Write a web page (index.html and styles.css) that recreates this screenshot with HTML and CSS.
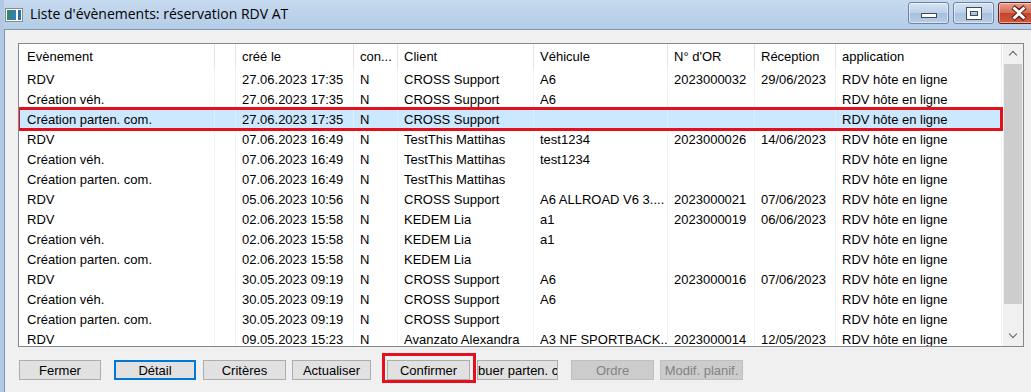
FILE: index.html
```html
<!DOCTYPE html>
<html lang="fr">
<head>
	<meta charset="UTF-8">
	<title>Liste d'évènements</title>
	<link rel="stylesheet" href="styles.css">
</head>
<body>
	<div class="window">
		<div class="titleBar">
			<span class="appIcon"></span>
			<span class="titleText">Liste d'évènements: réservation RDV AT</span>
			<div class="capButtons">
				<span class="capBtn"><span class="minGlyph"></span></span>
				<span class="capBtn"><span class="maxGlyph"></span></span>
				<span class="capBtn closeBtn">
					<svg width="22" height="16" viewBox="0 0 22 16">
						<path d="M5 2 L11 7 L17 2 M5 14 L11 9 L17 14" fill="none" stroke="#5a1a10" stroke-width="5"/>
						<path d="M5.5 2.5 L11 7.5 L16.5 2.5 M5.5 13.5 L11 8.5 L16.5 13.5" fill="none" stroke="#fff" stroke-width="3"/>
					</svg>
				</span>
			</div>
		</div>
		<div class="client">
			<div class="listBox">
				<div class="grid">
					<div class="row head">
						<span>Evènement</span><span></span><span>créé le</span><span>con...</span><span>Client</span><span>Véhicule</span><span>N° d'OR</span><span>Réception</span><span>application</span>
					</div>
					<div class="row">
						<span>RDV</span><span></span><span>27.06.2023 17:35</span><span>N</span><span>CROSS Support</span><span>A6</span><span>2023000032</span><span>29/06/2023</span><span>RDV hôte en ligne</span>
					</div>
					<div class="row">
						<span>Création véh.</span><span></span><span>27.06.2023 17:35</span><span>N</span><span>CROSS Support</span><span>A6</span><span></span><span></span><span>RDV hôte en ligne</span>
					</div>
					<div class="row selected">
						<span>Création parten. com.</span><span></span><span>27.06.2023 17:35</span><span>N</span><span>CROSS Support</span><span></span><span></span><span></span><span>RDV hôte en ligne</span>
					</div>
					<div class="row">
						<span>RDV</span><span></span><span>07.06.2023 16:49</span><span>N</span><span>TestThis Mattihas</span><span>test1234</span><span>2023000026</span><span>14/06/2023</span><span>RDV hôte en ligne</span>
					</div>
					<div class="row">
						<span>Création véh.</span><span></span><span>07.06.2023 16:49</span><span>N</span><span>TestThis Mattihas</span><span>test1234</span><span></span><span></span><span>RDV hôte en ligne</span>
					</div>
					<div class="row">
						<span>Création parten. com.</span><span></span><span>07.06.2023 16:49</span><span>N</span><span>TestThis Mattihas</span><span></span><span></span><span></span><span>RDV hôte en ligne</span>
					</div>
					<div class="row">
						<span>RDV</span><span></span><span>05.06.2023 10:56</span><span>N</span><span>CROSS Support</span><span>A6 ALLROAD V6 3....</span><span>2023000021</span><span>07/06/2023</span><span>RDV hôte en ligne</span>
					</div>
					<div class="row">
						<span>RDV</span><span></span><span>02.06.2023 15:58</span><span>N</span><span>KEDEM Lia</span><span>a1</span><span>2023000019</span><span>06/06/2023</span><span>RDV hôte en ligne</span>
					</div>
					<div class="row">
						<span>Création véh.</span><span></span><span>02.06.2023 15:58</span><span>N</span><span>KEDEM Lia</span><span>a1</span><span></span><span></span><span>RDV hôte en ligne</span>
					</div>
					<div class="row">
						<span>Création parten. com.</span><span></span><span>02.06.2023 15:58</span><span>N</span><span>KEDEM Lia</span><span></span><span></span><span></span><span>RDV hôte en ligne</span>
					</div>
					<div class="row">
						<span>RDV</span><span></span><span>30.05.2023 09:19</span><span>N</span><span>CROSS Support</span><span>A6</span><span>2023000016</span><span>07/06/2023</span><span>RDV hôte en ligne</span>
					</div>
					<div class="row">
						<span>Création véh.</span><span></span><span>30.05.2023 09:19</span><span>N</span><span>CROSS Support</span><span>A6</span><span></span><span></span><span>RDV hôte en ligne</span>
					</div>
					<div class="row">
						<span>Création parten. com.</span><span></span><span>30.05.2023 09:19</span><span>N</span><span>CROSS Support</span><span></span><span></span><span></span><span>RDV hôte en ligne</span>
					</div>
					<div class="row">
						<span>RDV</span><span></span><span>09.05.2023 15:23</span><span>N</span><span>Avanzato Alexandra</span><span>A3 NF SPORTBACK...</span><span>2023000014</span><span>12/05/2023</span><span>RDV hôte en ligne</span>
					</div>
				</div>
				<div class="scrollBar">
					<span class="arrow up"></span>
					<span class="thumb"></span>
					<span class="arrow down"></span>
				</div>
				<span class="mark markRow"></span>
			</div>
			<div class="buttons">
				<span class="btn bFermer">Fermer</span>
				<span class="btn default bDetail">Détail</span>
				<span class="btn bCriteres">Critères</span>
				<span class="btn bActualiser">Actualiser</span>
				<span class="btn bConfirmer">Confirmer</span>
				<span class="btn bAttribuer"><span>Attribuer parten. com.</span></span>
				<span class="btn disabled bOrdre">Ordre</span>
				<span class="btn disabled bModif">Modif. planif.</span>
				<span class="mark markBtn"></span>
			</div>
		</div>
	</div>
</body>
</html>
```
FILE: styles.css
```css
* {
	margin: 0;
	padding: 0;
	box-sizing: border-box;
}
body {
	width: 1031px;
	height: 392px;
	overflow: hidden;
	font-family: "Liberation Sans", Arial, sans-serif;
	font-size: 13px;
	color: #000;
	background: #f0f0f0;
}
.window {
	height: 392px;
	display: flex;
	flex-direction: column;
	border-left: 4px solid #b3c9e3;
	box-shadow: inset 1px 0 0 #7f93ae;
}
/* barre de titre */
.titleBar {
	height: 30px;
	display: flex;
	align-items: center;
	background: linear-gradient(#c6daef, #b4cce7);
	border-bottom: 1px solid #8797ab;
}
.appIcon {
	width: 18px;
	height: 14px;
	margin: 1px 7px 0 1px;
	border: 1px solid #8a8a8a;
	background: linear-gradient(90deg, #2d8a5e, #3a7db9 60%, #fff 62%, #fff 75%, #2d6fa6 78%);
	box-shadow: inset 0 0 0 1px #fff;
}
.titleText {
	font-family: "Open Sans", "Liberation Sans", sans-serif;
	font-size: 14px;
	margin-top: -2px;
}
.capButtons {
	display: flex;
	gap: 4px;
	margin-left: auto;
	margin-right: -8px;
	align-self: flex-start;
	margin-top: 2px;
}
.capBtn {
	width: 41px;
	height: 22px;
	border: 1px solid #6f84a3;
	border-radius: 3px;
	background: linear-gradient(#d7e4f3, #bcd0e8 50%, #a8c0de 51%, #b8cde6);
	box-shadow: inset 0 0 0 1px rgba(255, 255, 255, 0.5);
	display: flex;
	align-items: center;
	justify-content: center;
}
.minGlyph {
	width: 16px;
	height: 5px;
	margin-top: 4px;
	background: #fff;
	border: 1px solid #3b4a5e;
}
.maxGlyph {
	width: 14px;
	height: 11px;
	border: 3px solid #fff;
	outline: 1px solid #3b4a5e;
	box-shadow: inset 0 0 0 1px #3b4a5e;
}
.closeBtn {
	border-color: #6b1a12;
	background: linear-gradient(#e6a08f, #d46a52 50%, #c2442c 51%, #cf5a3f);
}
.client {
	flex: 1;
	padding: 13px 8px 0 14px;
	display: flex;
	flex-direction: column;
}
/* liste */
.listBox {
	position: relative;
	height: 304px;
	width: 1006px;
	border: 1px solid #828790;
	background: #fff;
	display: flex;
	overflow: hidden;
}
.grid {
	width: 983px;
}
.row {
	display: grid;
	grid-template-columns: 196px 21px 118px 44px 136px 134px 87px 81px 166px;
	height: 20px;
	line-height: 21px;
}
.row span {
	padding-left: 6px;
	white-space: nowrap;
	overflow: hidden;
	border-right: 1px solid #f0f4fa;
}
.row span:first-child {
	padding-left: 8px;
}
.row.head {
	height: 25px;
	line-height: 26px;
}
.row.head span {
	border-right-color: #e5e5e5;
}
.row.selected {
	background: #cce8ff;
}
.row.selected span {
	border-right-color: #d9eefe;
}
.scrollBar {
	width: 20px;
	margin-left: 1px;
	display: flex;
	flex-direction: column;
	background: #f0f0f0;
}
.arrow {
	height: 20px;
	position: relative;
}
.arrow:after {
	content: '';
	position: absolute;
	left: 7px;
	width: 5px;
	height: 5px;
	border-left: 1.5px solid #606060;
	border-top: 1.5px solid #606060;
}
.arrow.up:after {
	top: 8px;
	transform: rotate(45deg);
}
.arrow.down:after {
	top: 5px;
	transform: rotate(225deg);
}
.thumb {
	flex: 1;
	margin: 0 1px 22px;
	background: #cdcdcd;
}
/* cadres rouges */
.mark {
	position: absolute;
	border: 3px solid #e3101e;
}
.markRow {
	left: -2px;
	top: 63px;
	width: 986px;
	height: 24px;
}
/* boutons */
.buttons {
	position: relative;
	display: flex;
	margin-top: 13px;
	padding-left: 1px;
}
.btn {
	width: 83px;
	height: 20px;
	background: #e1e1e1;
	border: 1px solid #adadad;
	white-space: nowrap;
	overflow: hidden;
	display: flex;
	align-items: center;
	justify-content: center;
}
.btn.default {
	border: 2px solid #0078d7;
}
.bFermer { width: 82px; }
.bDetail { width: 82px; margin-left: 13px; }
.bCriteres { margin-left: 7px; }
.bActualiser { width: 79px; margin-left: 6px; }
.bConfirmer { margin-left: 16px; }
.bAttribuer { width: 81px; margin-left: 7px; }
.bOrdre { margin-left: 13px; }
.bModif { margin-left: 6px; }
.btn.disabled {
	background: #cccccc;
	border-color: #bfbfbf;
	color: #838383;
}
.markBtn {
	left: 364px;
	top: -7px;
	width: 94px;
	height: 30px;
}
```
